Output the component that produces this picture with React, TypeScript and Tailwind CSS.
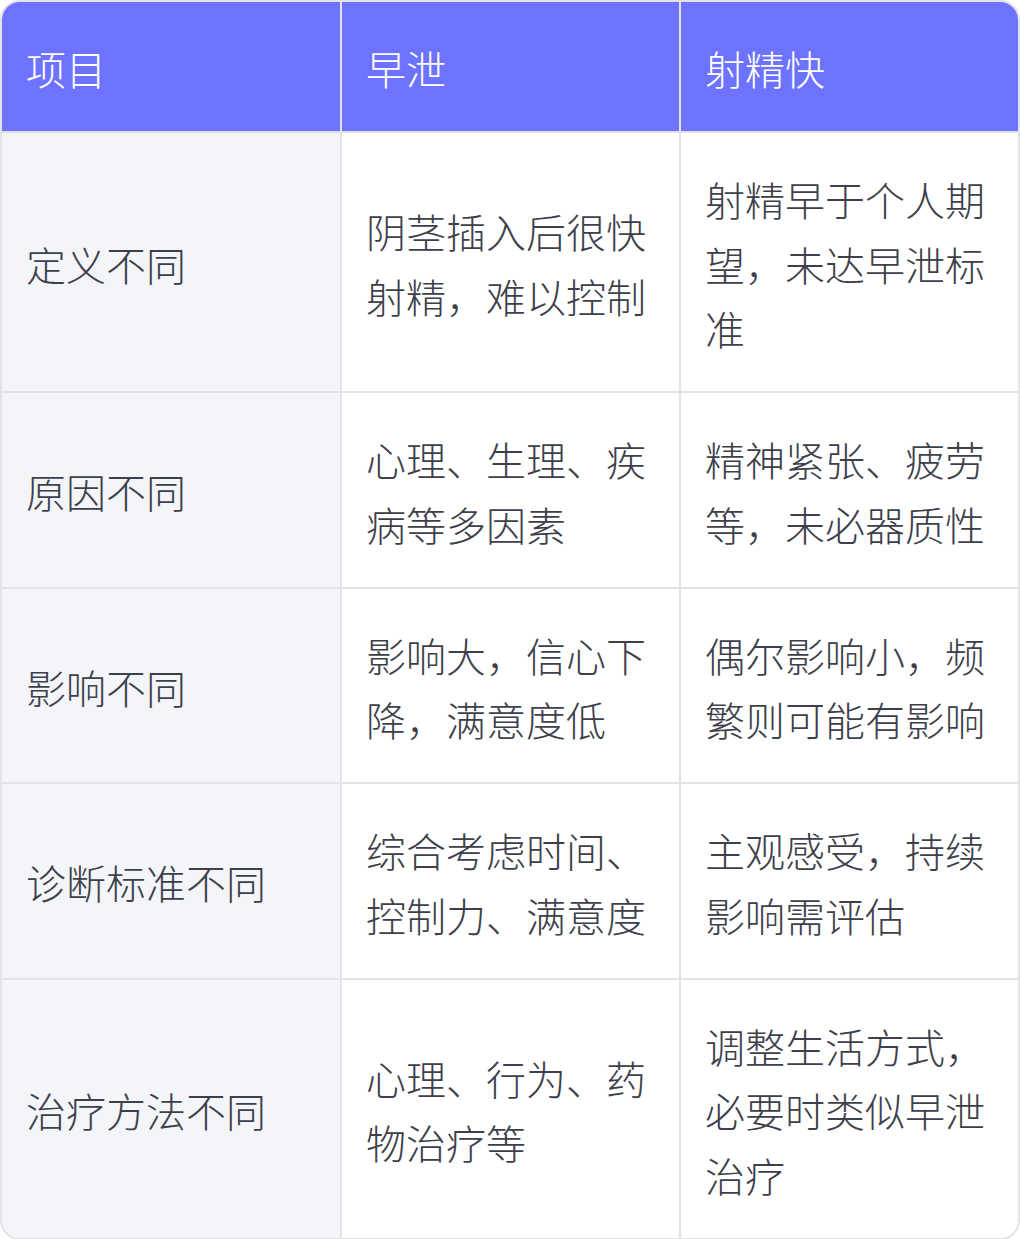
const HEAD = ["项目", "早泄", "射精快"];

const ROWS = [
  ["定义不同", "阴茎插入后很快射精，难以控制", "射精早于个人期望，未达早泄标准"],
  ["原因不同", "心理、生理、疾病等多因素", "精神紧张、疲劳等，未必器质性"],
  ["影响不同", "影响大，信心下降，满意度低", "偶尔影响小，频繁则可能有影响"],
  ["诊断标准不同", "综合考虑时间、控制力、满意度", "主观感受，持续影响需评估"],
  ["治疗方法不同", "心理、行为、药物治疗等", "调整生活方式，必要时类似早泄治疗"],
];

export default function App() {
  return (
    <div className="w-[1020px] bg-white">
      <div className="overflow-hidden rounded-[20px] border-2 border-[#e2e2e7] font-['Noto_Sans_CJK_SC','Noto_Sans',sans-serif] text-[40px] font-light leading-[64.5px]">
        <table className="w-full table-fixed border-collapse">
          <colgroup>
            <col className="w-[339px]" />
            <col className="w-[339px]" />
            <col />
          </colgroup>
          <thead>
            <tr className="bg-[#6e73ff] text-white">
              {HEAD.map((h, i) => (
                <th
                  key={h}
                  className={`px-6 pt-[34px] pb-[30.5px] text-left font-light align-middle border-b-2 border-[#dedee8] ${
                    i < 2 ? "border-r-2 border-r-[#e2e2e7]" : ""
                  }`}
                >
                  {h}
                </th>
              ))}
            </tr>
          </thead>
          <tbody>
            {ROWS.map((row, r) => (
              <tr key={r} className="text-[#3d404b]">
                {row.map((cell, i) => (
                  <td
                    key={i}
                    className={`px-6 pt-[34px] pb-[30.5px] align-middle ${
                      r < ROWS.length - 1 ? "border-b-2 border-[#e2e2e7]" : ""
                    } ${i < 2 ? "border-r-2 border-r-[#e2e2e7]" : ""} ${
                      i === 0 ? "bg-[#f4f5f9]" : "bg-white"
                    }`}
                  >
                    {cell}
                  </td>
                ))}
              </tr>
            ))}
          </tbody>
        </table>
      </div>
    </div>
  );
}
